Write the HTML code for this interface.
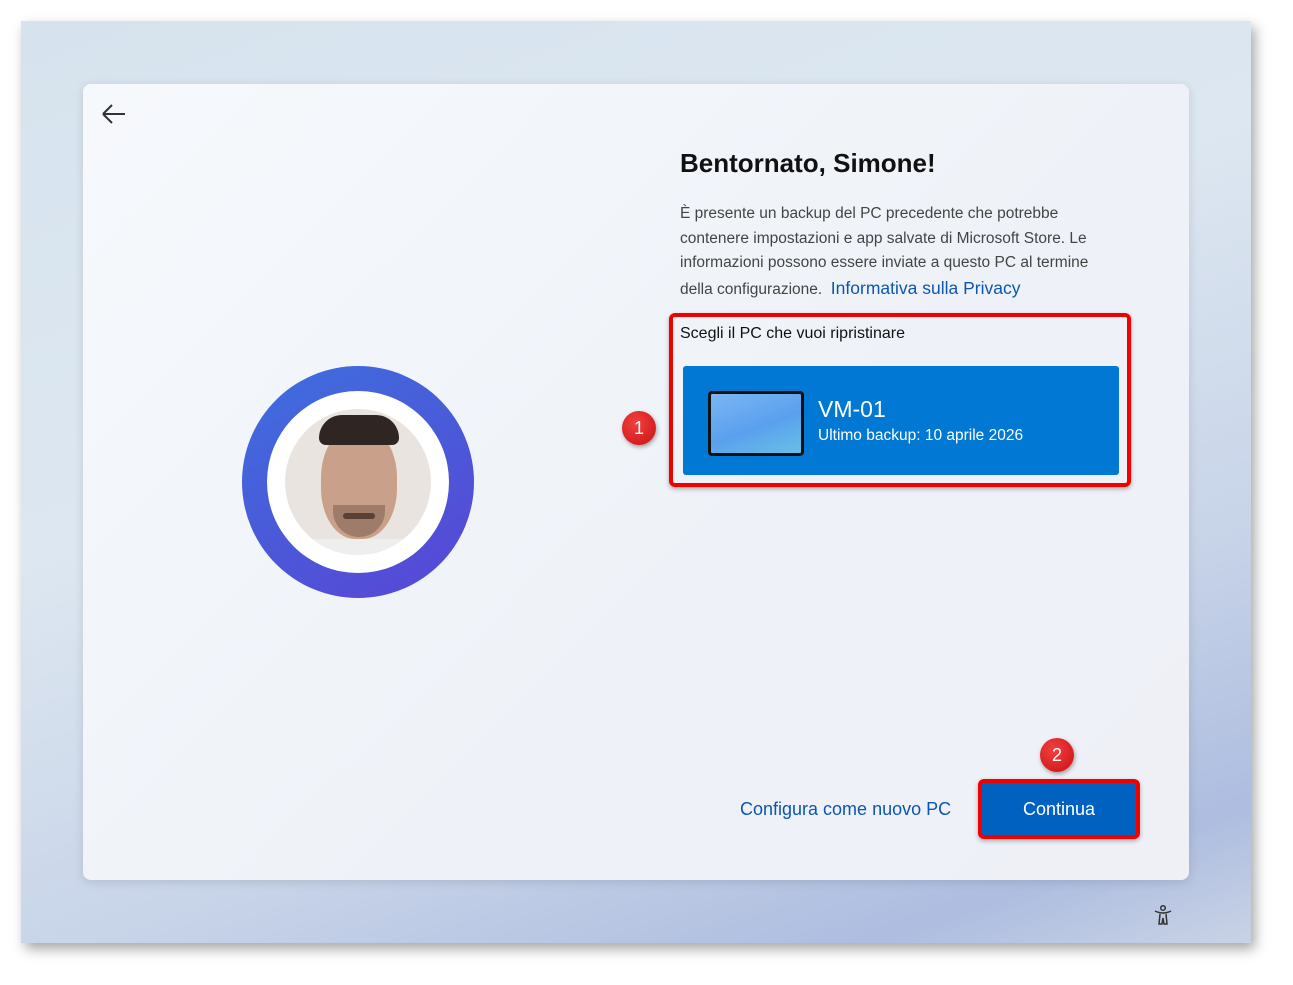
<!DOCTYPE html>
<html><head><meta charset="utf-8"><style>
*{margin:0;padding:0;box-sizing:border-box}
body{width:1293px;height:985px;background:#fff;position:relative;overflow:hidden;font-family:"Segoe UI","Liberation Sans",sans-serif}
.screen{position:absolute;left:21px;top:21px;width:1230px;height:922px;background:linear-gradient(160deg,#d6e3ee 0%,#dde7f1 40%,#c7d3e8 70%,#aebde0 90%,#c9d3e6 100%);box-shadow:4px 6px 12px rgba(0,0,0,.35)}
.card{position:absolute;left:83px;top:84px;width:1106px;height:796px;border-radius:8px;background:linear-gradient(135deg,#f6f9fc,#eef2f8 60%,#eef0f6);box-shadow:0 2px 10px rgba(0,0,0,.12)}
.abs{position:absolute}
h1{position:absolute;left:680px;top:148px;font-size:26px;font-weight:600;color:#111}
.p{position:absolute;left:680px;top:202px;width:440px;font-size:15.5px;line-height:24.5px;color:#444}
.link{color:#0b57b0;font-size:17.5px}
.redbox{position:absolute;left:669px;top:313px;width:462px;height:174px;border:4px solid #f10000;border-radius:6px;box-shadow:0 2px 5px rgba(0,0,0,.3)}
.tile{position:absolute;left:683px;top:366px;width:436px;height:109px;background:#0078d4;border-radius:3px}
.badge{position:absolute;width:34px;height:34px;border-radius:50%;background:radial-gradient(circle at 40% 35%,#f04040,#cc1010);color:#fff;font-size:18px;text-align:center;line-height:34px;box-shadow:1px 2px 4px rgba(0,0,0,.35)}
</style></head><body>
<div class="screen"></div>
<div class="card"></div>
<svg class="abs" style="left:100px;top:102px" width="28" height="24"><path d="M3 12H25M3 12L12 3M3 12L12 21" stroke="#333" stroke-width="2" fill="none"/></svg>
<div class="abs" style="left:242px;top:366px;width:232px;height:232px;border-radius:50%;background:linear-gradient(150deg,#3f6fe0,#4a5ad8 50%,#5a45d6)"></div>
<div class="abs" style="left:267px;top:391px;width:182px;height:182px;border-radius:50%;background:#fff"></div>
<div class="abs" style="left:285px;top:409px;width:146px;height:146px;border-radius:50%;background:#e9e4e0;overflow:hidden">
<div class="abs" style="left:36px;top:18px;width:76px;height:112px;border-radius:45%;background:#c9a08a"></div>
<div class="abs" style="left:34px;top:6px;width:80px;height:30px;border-radius:40px 40px 12px 12px;background:#2f2624"></div>
<div class="abs" style="left:48px;top:96px;width:52px;height:32px;border-radius:0 0 30px 30px;background:rgba(80,55,45,.35)"></div>
<div class="abs" style="left:58px;top:104px;width:32px;height:6px;border-radius:3px;background:#5a4036"></div>
<div class="abs" style="left:20px;top:130px;width:106px;height:30px;background:#eee"></div>
</div>
<h1>Bentornato, Simone!</h1>
<div class="p">È presente un backup del PC precedente che potrebbe contenere impostazioni e app salvate di Microsoft Store. Le informazioni possono essere inviate a questo PC al termine della configurazione. &nbsp;<span class="link">Informativa sulla Privacy</span></div>
<div class="redbox"></div>
<div class="abs" style="left:680px;top:325px;font-size:16px;color:#111">Scegli il PC che vuoi ripristinare</div>
<div class="tile"></div>
<div class="abs" style="left:708px;top:391px;width:96px;height:65px;border:3px solid #111;border-radius:4px;background:linear-gradient(160deg,#7bb6f4,#5aa0ee 55%,#68c0e6)"></div>
<div class="abs" style="left:818px;top:396px;font-size:23px;color:#fff">VM-01</div>
<div class="abs" style="left:818px;top:427px;font-size:15.5px;color:#fff">Ultimo backup: 10 aprile 2026</div>
<div class="badge" style="left:622px;top:411px">1</div>
<div class="badge" style="left:1040px;top:738px">2</div>
<div class="abs" style="left:740px;top:799px;font-size:18px;color:#0b57b0">Configura come nuovo PC</div>
<div class="abs" style="left:978px;top:779px;width:162px;height:60px;border:4px solid #f10000;border-radius:6px;background:#0061c0;color:#fff;font-size:18px;text-align:center;line-height:52px;box-shadow:0 2px 5px rgba(0,0,0,.3)">Continua</div>
<svg class="abs" style="left:1153px;top:904px" width="20" height="22"><g stroke="#333" stroke-width="1.5" fill="none"><circle cx="10" cy="4" r="2.3"/><path d="M2 7Q10 11 18 7M7 10L6 20H9L10 14L11 20H14L13 10"/></g></svg>
</body></html>
